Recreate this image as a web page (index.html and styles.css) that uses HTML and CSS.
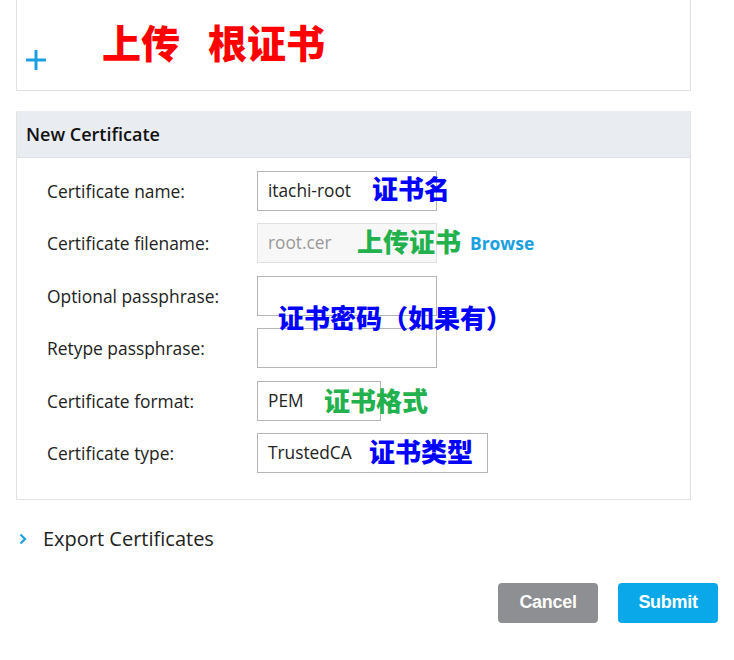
FILE: index.html
```html
<!DOCTYPE html>
<html>
<head>
<meta charset="utf-8">
<link rel="stylesheet" href="styles.css">
</head>
<body>
<div class="top-card">
  <svg class="plus" width="22" height="22" viewBox="0 0 22 22"><path d="M11 1 V21 M1 11 H21" stroke="#1aa0e0" stroke-width="3" fill="none"/></svg>
  <span class="note note-red"><span>上传</span><span class="gap">根证书</span></span>
</div>

<div class="panel">
  <div class="panel-head">New Certificate</div>
  <div class="panel-body">
    <div class="row">
      <label class="lbl">Certificate name:</label>
      <div class="field w180">itachi-root</div>
      <span class="note note-blue n-name">证书名</span>
    </div>
    <div class="row">
      <label class="lbl">Certificate filename:</label>
      <div class="field w180 disabled">root.cer</div>
      <span class="note note-green n-file">上传证书</span>
      <span class="browse">Browse</span>
    </div>
    <div class="row">
      <label class="lbl">Optional passphrase:</label>
      <div class="field w180"></div>
    </div>
    <div class="row">
      <label class="lbl">Retype passphrase:</label>
      <div class="field w180"></div>
      <span class="note note-blue n-pass">证书密码（如果有）</span>
    </div>
    <div class="row">
      <label class="lbl">Certificate format:</label>
      <div class="field w124">PEM</div>
      <span class="note note-green n-fmt">证书格式</span>
    </div>
    <div class="row">
      <label class="lbl">Certificate type:</label>
      <div class="field w231">TrustedCA</div>
      <span class="note note-blue n-type">证书类型</span>
    </div>
  </div>
</div>

<div class="export">
  <svg class="chev" width="8" height="12" viewBox="0 0 8 12"><path d="M1.5 1.5 L6 6 L1.5 10.5" fill="none" stroke="#1aa0e0" stroke-width="2.2"/></svg>
  <span>Export Certificates</span>
</div>

<div class="actions">
  <button class="btn btn-cancel">Cancel</button>
  <button class="btn btn-submit">Submit</button>
</div>
</body>
</html>
```
FILE: styles.css
```css
html, body {
  margin: 0;
  padding: 0;
  background: #fff;
}
body {
  font-family: "Open Sans", "Noto Sans", sans-serif;
  color: #222;
  width: 734px;
  height: 660px;
  overflow: hidden;
}
.top-card {
  position: relative;
  margin-left: 16px;
  width: 675px;
  height: 91px;
  box-sizing: border-box;
  border: 1px solid #e2e2e2;
  border-top: none;
}
.plus {
  position: absolute;
  left: 8px;
  top: 49px;
}
.note {
  position: absolute;
  font-family: "Noto Sans CJK SC", sans-serif;
  font-weight: 900;
  white-space: nowrap;
  line-height: 1;
}
.note-red {
  color: #ff0000;
  font-size: 39px;
  left: 85px;
  top: 22px;
}
.note-red .gap { margin-left: 28px; }
.note-blue { color: #0000ff; font-size: 26px; }
.note-green { color: #22b14c; font-size: 26px; }
.panel {
  margin: 20px 0 0 16px;
  width: 675px;
  box-sizing: border-box;
  border: 1px solid #e2e2e2;
  border-top: none;
}
.panel-head {
  background: #e9ecf0;
  height: 46px;
  border-bottom: 1px solid #dde0e4;
  box-sizing: content-box;
  padding-left: 9px;
  font-size: 18px;
  font-weight: 600;
  line-height: 46px;
  color: #111;
}
.panel-body {
  padding: 13px 0 26px 30px;
  display: flex;
  flex-direction: column;
  gap: 12.4px;
}
.row {
  position: relative;
  display: flex;
  align-items: center;
  height: 40px;
}
.lbl {
  width: 210px;
  font-size: 17.4px;
  color: #222;
}
.field {
  height: 40px;
  box-sizing: border-box;
  border: 1px solid #b5b5b5;
  padding-left: 10px;
  font-size: 17.3px;
  line-height: 38px;
  color: #222;
  background: #fff;
}
.field.disabled {
  background: #f7f7f7;
  border-color: #e0e0e0;
  color: #999;
}
.w180 { width: 180px; }
.w124 { width: 124px; }
.w231 { width: 231px; }
.n-name { left: 325px; top: 4px; }
.n-file { left: 310px; top: 5px; }
.browse {
  position: absolute;
  left: 423px;
  top: 8px;
  font-size: 17.4px;
  font-weight: 700;
  color: #1aa0e0;
}
.n-pass { left: 231px; top: -24px; }
.n-fmt { left: 277px; top: 6px; }
.n-type { left: 322px; top: 5px; }
.export {
  display: flex;
  align-items: center;
  gap: 16px;
  margin: 25px 0 0 19px;
  height: 28px;
  font-size: 20px;
  color: #222;
}
.chev { flex: none; }
.actions {
  display: flex;
  justify-content: flex-end;
  gap: 20px;
  margin: 30px 16px 0 0;
}
.btn {
  width: 100px;
  height: 40px;
  border: none;
  border-radius: 4px;
  color: #fff;
  font-family: "Liberation Sans", Arial, sans-serif;
  font-weight: 700;
  font-size: 18px;
  letter-spacing: -0.3px;
}
.btn-cancel { background: #8e8f93; }
.btn-submit { background: #0aa8e8; }
```
